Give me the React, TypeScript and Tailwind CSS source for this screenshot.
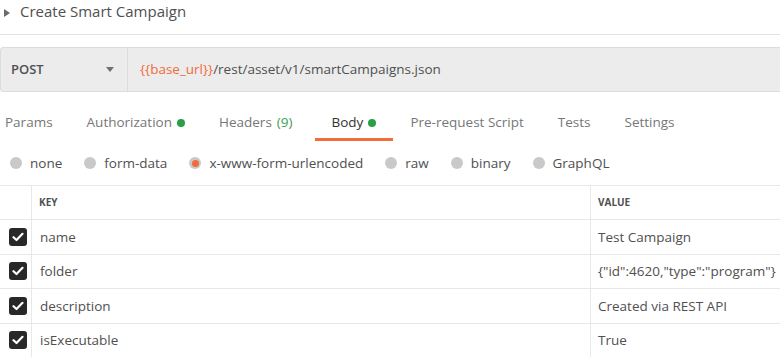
import React from "react";

const tabs = [
  { label: "Params" },
  { label: "Authorization", dot: true },
  { label: "Headers", count: "(9)" },
  { label: "Body", dot: true, active: true },
  { label: "Pre-request Script" },
  { label: "Tests" },
  { label: "Settings" },
];

const bodyTypes = ["none", "form-data", "x-www-form-urlencoded", "raw", "binary", "GraphQL"];

const rows = [
  { key: "name", value: "Test Campaign" },
  { key: "folder", value: '{"id":4620,"type":"program"}' },
  { key: "description", value: "Created via REST API" },
  { key: "isExecutable", value: "True" },
];

const CheckBox = () => (
  <div className="flex h-[18px] w-[18px] items-center justify-center rounded-[3px] bg-[#282828]">
    <svg width="12" height="10" viewBox="0 0 12 10" fill="none">
      <path d="M1.5 5.2 L4.5 8 L10.5 1.8" stroke="#fff" strokeWidth="2.2" strokeLinecap="round" strokeLinejoin="round" />
    </svg>
  </div>
);

export default function App() {
  return (
    <div
      className="h-[357px] w-[780px] overflow-hidden bg-white text-[#505050]"
      style={{ fontFamily: '"Open Sans", "Noto Sans", sans-serif' }}
    >
      {/* title */}
      <div className="flex h-[35px] items-center border-b border-[#e3e3e3] pb-[11px]">
        <svg width="6" height="8" viewBox="0 0 6 8" className="ml-[4px] mt-[3px]">
          <path d="M0 0 L6 4 L0 8 Z" fill="#6b6b6b" />
        </svg>
        <span className="ml-[10px] text-[15px] text-[#505050]">Create Smart Campaign</span>
      </div>

      {/* url bar */}
      <div className="mt-[12px] flex h-[45px] w-[800px] rounded-[3px] border border-[#dcdcdc] bg-[#ececec]">
        <div className="flex w-[127px] items-center justify-between border-r border-[#dcdcdc] pl-[10px] pr-[13px]">
          <span className="text-[13px] font-semibold text-[#505050]">POST</span>
          <svg width="8" height="5" viewBox="0 0 8 5">
            <path d="M0 0 L8 0 L4 5 Z" fill="#707070" />
          </svg>
        </div>
        <div className="flex items-center pl-[12px] text-[13.5px] text-[#505050]">
          <span className="text-[#f26b3a]">{"{{base_url}}"}</span>
          <span>/rest/asset/v1/smartCampaigns.json</span>
        </div>
      </div>

      {/* tabs */}
      <div className="ml-[-12px] mt-[19px] flex h-[30px]">
        {tabs.map((t) => (
          <div
            key={t.label}
            className={`flex items-center gap-[5px] border-b-[3px] pl-[17px] pb-[4px] text-[13.5px] ${
              t.count ? "pr-[22px]" : "pr-[17px]"
            } ${t.active ? "border-[#f26b3a] text-[#333]" : "border-transparent text-[#777]"}`}
          >
            <span>{t.label}</span>
            {t.count && <span className="text-[#3aa050]">{t.count}</span>}
            {t.dot && <span className="h-[8px] w-[8px] rounded-full bg-[#27a048]" />}
          </div>
        ))}
      </div>

      {/* body type radios */}
      <div className="mt-[12px] flex h-[20px] items-center gap-[22px] pl-[10px] text-[13.5px] text-[#505050]">
        {bodyTypes.map((b) => (
          <div key={b} className="flex items-center gap-[8px]">
            <span className="flex h-[12px] w-[12px] items-center justify-center rounded-full bg-[#c9c9c9]">
              {b === "x-www-form-urlencoded" && (
                <span className="h-[7px] w-[7px] rounded-full bg-[#f26b3a]" />
              )}
            </span>
            <span>{b}</span>
          </div>
        ))}
      </div>

      {/* table */}
      <div className="mt-[12px] w-[820px] border-t border-[#e8e8e8]">
        <div className="flex h-[34px] border-b border-[#e8e8e8] text-[10px] font-bold text-[#505050]">
          <div className="w-[32px] border-r border-[#e8e8e8]" />
          <div className="flex w-[559px] items-center border-r border-[#e8e8e8] pl-[7px]">KEY</div>
          <div className="flex flex-1 items-center pl-[7px]">VALUE</div>
        </div>
        {rows.map((r) => (
          <div key={r.key} className="flex h-[34.5px] border-b border-[#e8e8e8] text-[13.5px] text-[#505050]">
            <div className="flex w-[32px] items-center border-r border-[#e8e8e8] pl-[9px]">
              <CheckBox />
            </div>
            <div className="flex w-[559px] items-center border-r border-[#e8e8e8] pl-[8px]">{r.key}</div>
            <div className="flex flex-1 items-center pl-[7px]">{r.value}</div>
          </div>
        ))}
      </div>
    </div>
  );
}
